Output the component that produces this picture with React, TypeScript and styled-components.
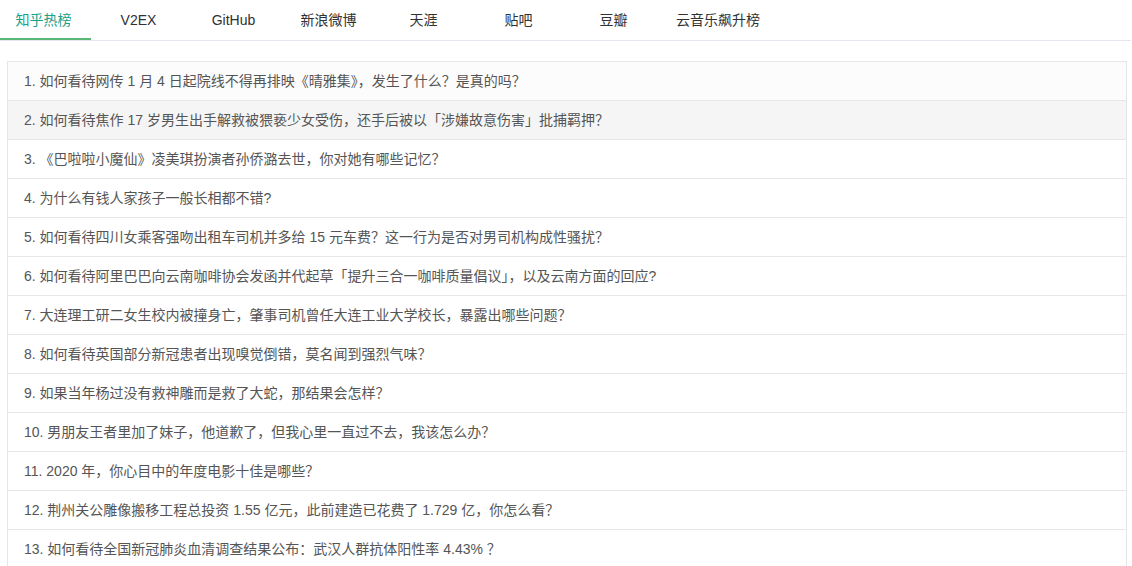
import styled, { createGlobalStyle } from "styled-components";
import { useState } from "react";

const GlobalStyle = createGlobalStyle`
  html, body {
    margin: 0;
    padding: 0;
    background: #fff;
    font-family: "Liberation Sans", "Noto Sans CJK SC", sans-serif;
    overflow: hidden;
  }
`;

const tabs = ["知乎热榜", "V2EX", "GitHub", "新浪微博", "天涯", "贴吧", "豆瓣", "云音乐飙升榜"];

const items = [
  "如何看待网传 1 月 4 日起院线不得再排映《晴雅集》，发生了什么？是真的吗？",
  "如何看待焦作 17 岁男生出手解救被猥亵少女受伤，还手后被以「涉嫌故意伤害」批捕羁押？",
  "《巴啦啦小魔仙》凌美琪扮演者孙侨潞去世，你对她有哪些记忆？",
  "为什么有钱人家孩子一般长相都不错?",
  "如何看待四川女乘客强吻出租车司机并多给 15 元车费？这一行为是否对男司机构成性骚扰？",
  "如何看待阿里巴巴向云南咖啡协会发函并代起草「提升三合一咖啡质量倡议」，以及云南方面的回应?",
  "大连理工研二女生校内被撞身亡，肇事司机曾任大连工业大学校长，暴露出哪些问题？",
  "如何看待英国部分新冠患者出现嗅觉倒错，莫名闻到强烈气味？",
  "如果当年杨过没有救神雕而是救了大蛇，那结果会怎样？",
  "男朋友王者里加了妹子，他道歉了，但我心里一直过不去，我该怎么办？",
  "2020 年，你心目中的年度电影十佳是哪些？",
  "荆州关公雕像搬移工程总投资 1.55 亿元，此前建造已花费了 1.729 亿，你怎么看？",
  "如何看待全国新冠肺炎血清调查结果公布：武汉人群抗体阳性率 4.43% ？",
];

export default function App() {
  const [current, setCurrent] = useState(0);
  const [hovered, setHovered] = useState<number | null>(1);

  return (
    <Page>
      <GlobalStyle />
      <TabBar>
        <TabList>
          {tabs.map((t, i) => (
            <Tab key={t} $active={i === current} onClick={() => setCurrent(i)}>
              {t}
            </Tab>
          ))}
        </TabList>
      </TabBar>
      <ListWrapper>
        <List>
          {items.map((text, i) => (
            <Row
              key={i}
              $first={i === 0}
              $hover={hovered === i}
              onMouseEnter={() => setHovered(i)}
            >
              {i + 1}. {text}
            </Row>
          ))}
        </List>
      </ListWrapper>
    </Page>
  );
}

const Page = styled.div`
  width: 100%;
`;

const TabBar = styled.div`
  height: 40px;
  border-bottom: 1px solid #e4e7ed;
  margin-right: 1px;
  overflow: hidden;
`;

const TabList = styled.div`
  display: flex;
  margin-left: -4px;
  height: 40px;
`;

const Tab = styled.div<{ $active: boolean }>`
  min-width: 95px;
  padding: 0 15px;
  box-sizing: border-box;
  height: 40px;
  line-height: 40px;
  text-align: center;
  font-size: 14px;
  color: ${(p) => (p.$active ? "#17a189" : "#303133")};
  border-bottom: 2px solid ${(p) => (p.$active ? "#5bb776" : "transparent")};
  cursor: pointer;
`;

const ListWrapper = styled.div`
  padding: 20px 5px 0 7px;
`;

const List = styled.div`
  border: 1px solid #e6e6e6;
  border-bottom: none;
  display: flex;
  flex-direction: column;
`;

const Row = styled.div<{ $first: boolean; $hover: boolean }>`
  height: 38px;
  line-height: 38px;
  padding: 0 16px;
  font-size: 14px;
  color: #555;
  border-bottom: 1px solid #e6e6e6;
  white-space: nowrap;
  background: ${(p) => (p.$hover ? "#f5f5f5" : p.$first ? "#fcfcfc" : "#fff")};
`;
